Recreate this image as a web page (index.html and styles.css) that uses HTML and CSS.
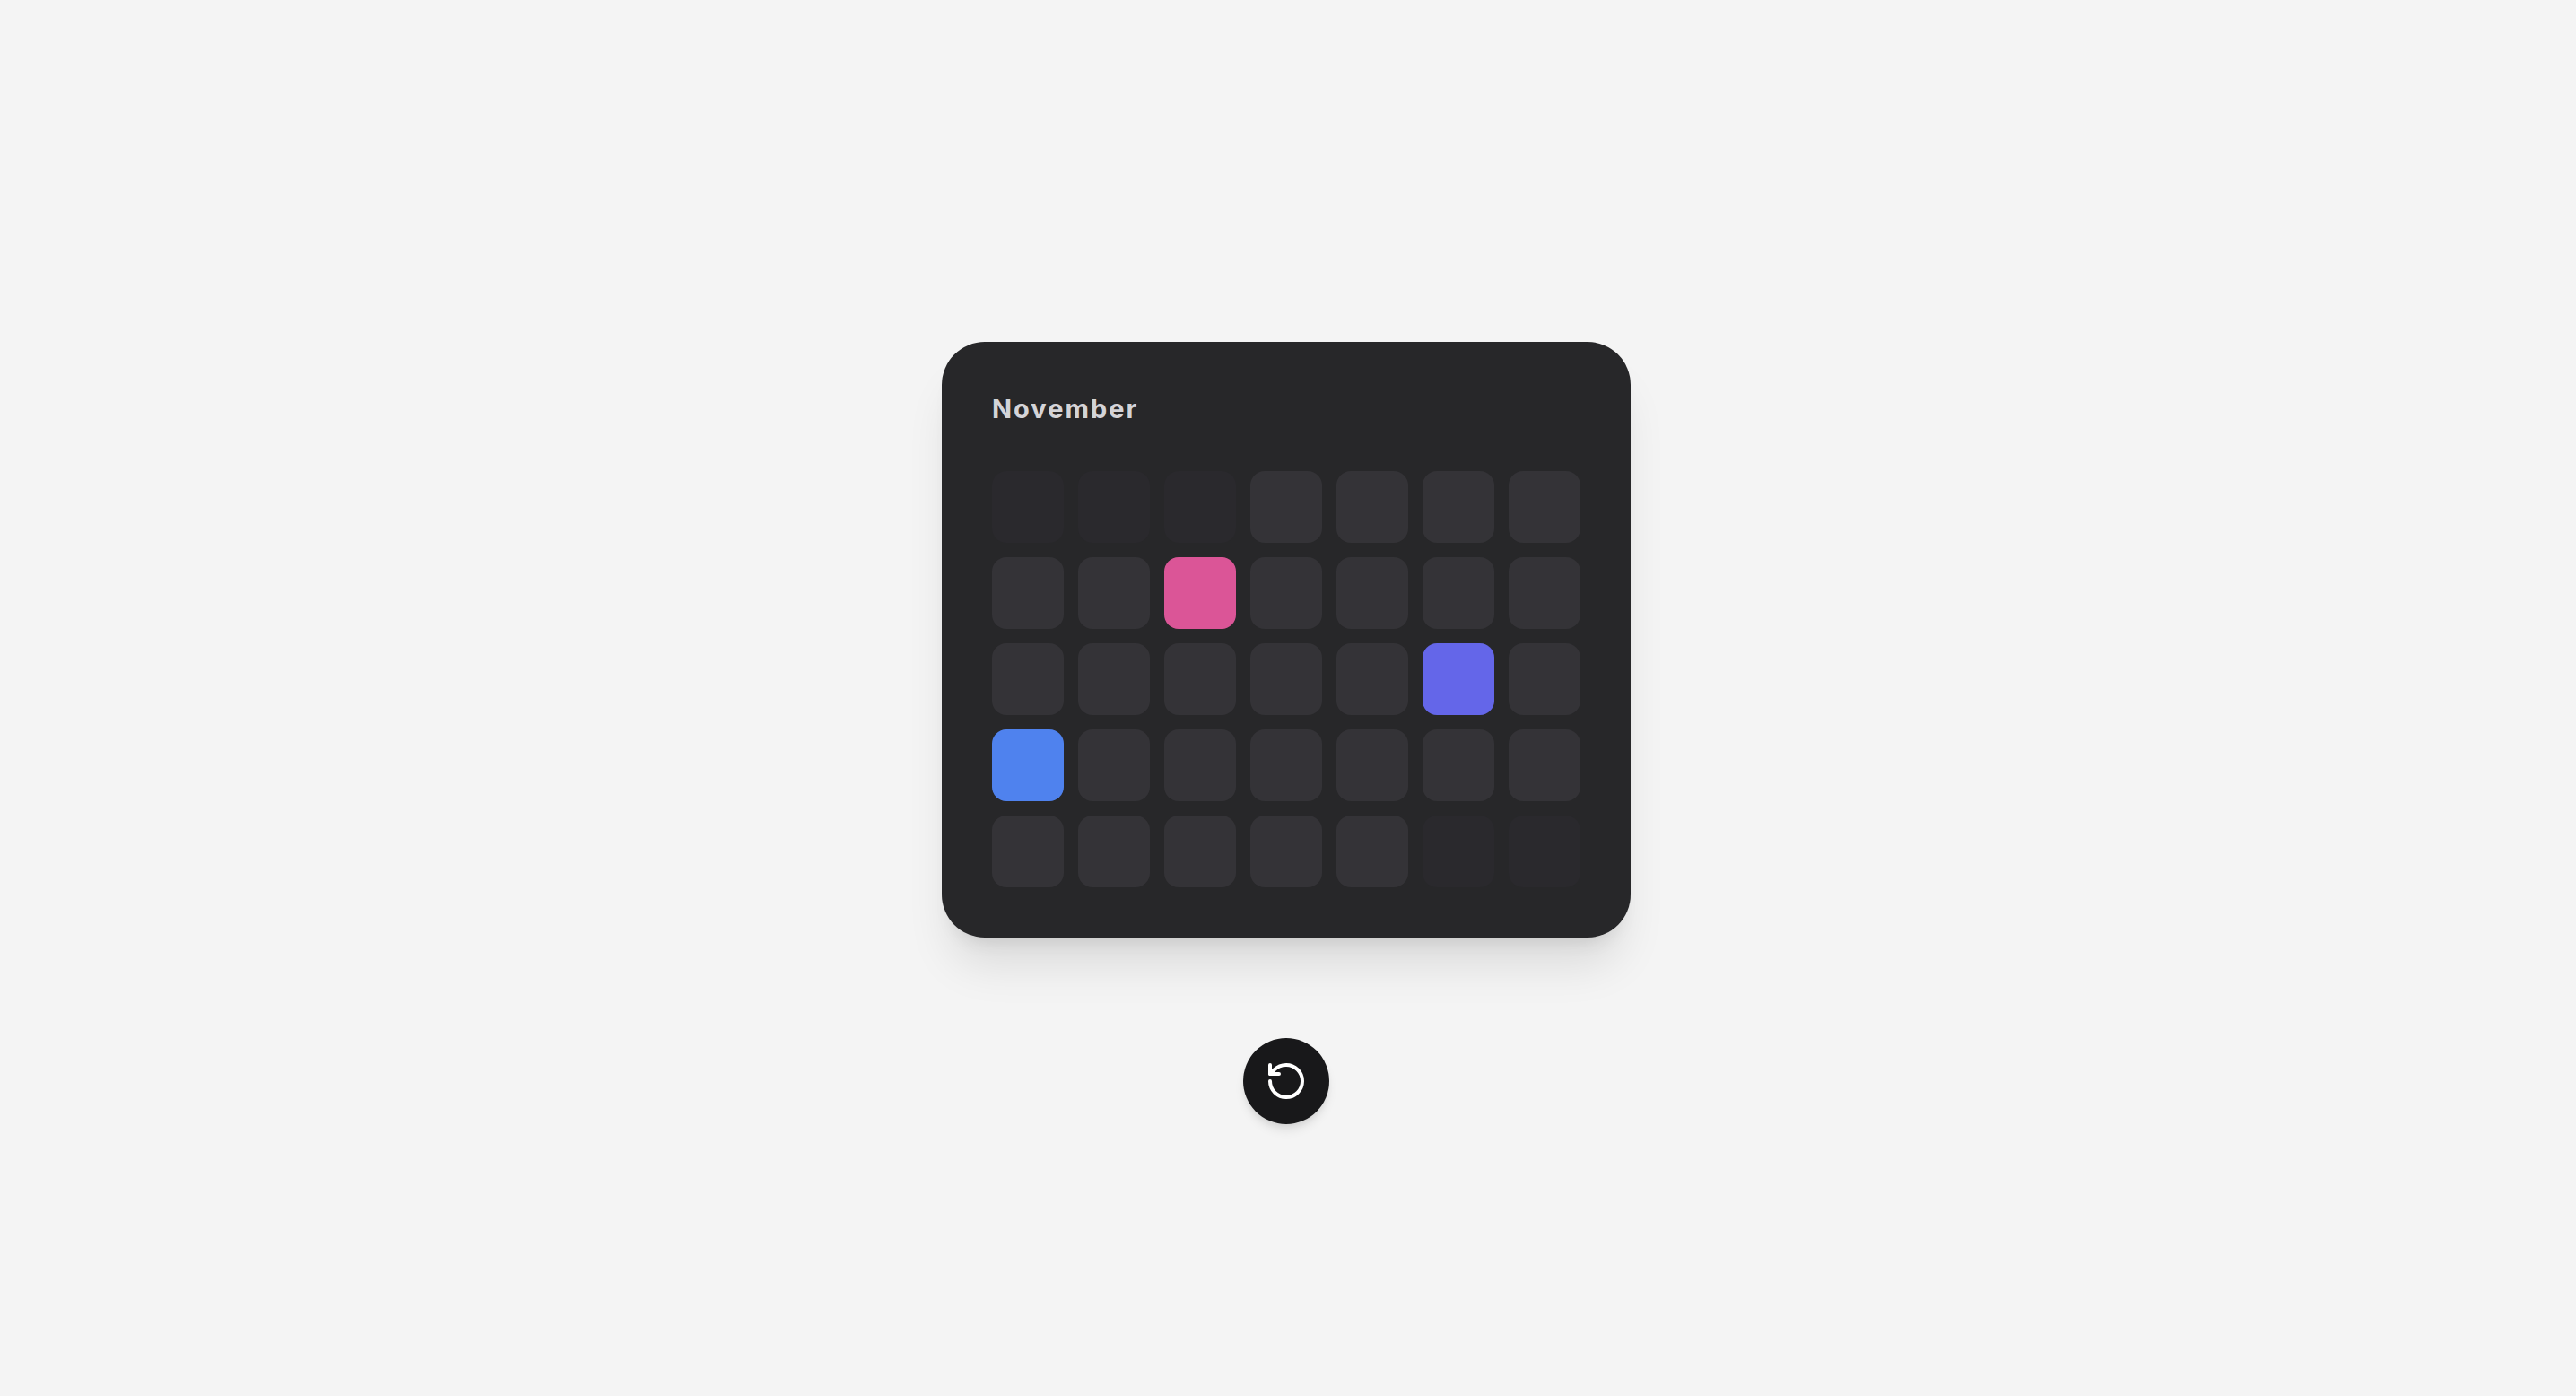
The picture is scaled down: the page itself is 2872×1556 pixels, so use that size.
FILE: index.html
```html
<!DOCTYPE html>
<html lang="en">
<head>
  <meta charset="utf-8">
  <meta name="viewport" content="width=device-width, initial-scale=1">
  <title>November</title>
  <link rel="stylesheet" href="styles.css">
</head>
<body>
  <main class="page">
    <section class="card" aria-labelledby="month">
      <h1 class="month" id="month">November</h1>
      <div class="days">
        <span class="day day-outside"></span><span class="day day-outside"></span><span class="day day-outside"></span><span class="day"></span><span class="day"></span><span class="day"></span><span class="day"></span>
        <span class="day"></span><span class="day"></span><span class="day day-pink"></span><span class="day"></span><span class="day"></span><span class="day"></span><span class="day"></span>
        <span class="day"></span><span class="day"></span><span class="day"></span><span class="day"></span><span class="day"></span><span class="day day-indigo"></span><span class="day"></span>
        <span class="day day-blue"></span><span class="day"></span><span class="day"></span><span class="day"></span><span class="day"></span><span class="day"></span><span class="day"></span>
        <span class="day"></span><span class="day"></span><span class="day"></span><span class="day"></span><span class="day"></span><span class="day day-outside"></span><span class="day day-outside"></span>
      </div>
    </section>
    <button class="reset" type="button" aria-label="Reset">
      <svg class="reset-icon" viewBox="0 0 24 24" aria-hidden="true">
        <path d="M3 12a9 9 0 1 0 9-9 9.75 9.75 0 0 0-6.74 2.74L3 8"/>
        <path d="M3 3v5h5"/>
      </svg>
    </button>
  </main>
</body>
</html>
```

FILE: styles.css
```css
* {
  box-sizing: border-box;
}

body {
  margin: 0;
  background: #f4f4f4;
  font-family: Inter, "Liberation Sans", sans-serif;
}

.page {
  min-height: 100vh;
  padding: 78px 4px 0 0;
  display: flex;
  flex-direction: column;
  align-items: center;
  justify-content: center;
  gap: 112px;
}

.card {
  padding: 56px;
  border-radius: 48px;
  background: #272729;
  box-shadow: 0 40px 50px -10px rgba(0, 0, 0, 0.1), 0 16px 20px -12px rgba(0, 0, 0, 0.1);
}

.month {
  margin: 0 0 50px;
  color: #d4d4d8;
  font-size: 29px;
  font-weight: 700;
  line-height: 38px;
  letter-spacing: 2px;
}

.days {
  display: grid;
  grid-template-columns: repeat(7, 80px);
  gap: 16px;
}

.day {
  height: 80px;
  border-radius: 16px;
  background: #343337;
}

.day-outside {
  background: #2a292d;
}

.day-pink {
  background: #db5597;
}

.day-indigo {
  background: #6466e9;
}

.day-blue {
  background: #4f82ee;
}

.reset {
  display: flex;
  align-items: center;
  justify-content: center;
  width: 96px;
  height: 96px;
  padding: 0;
  border: 0;
  border-radius: 50%;
  background: #18181a;
  color: #fff;
  box-shadow: 0 8px 12px -2px rgba(0, 0, 0, 0.1), 0 4px 8px -4px rgba(0, 0, 0, 0.1);
  cursor: pointer;
}

.reset-icon {
  width: 48px;
  height: 48px;
  fill: none;
  stroke: currentColor;
  stroke-width: 2;
  stroke-linecap: round;
  stroke-linejoin: round;
}
```
